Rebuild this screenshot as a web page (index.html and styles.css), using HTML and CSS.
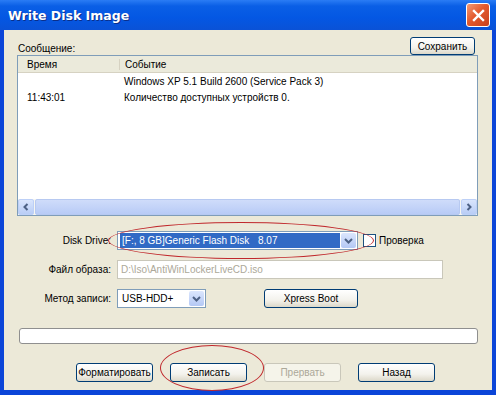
FILE: index.html
```html
<html>
    <head>
        <title>Write Disk Image</title>
        <link rel="stylesheet" href="styles.css">
    </head>
    <body>
        <div class="okno">
            <div class="zagolovok">
                <span class="nazvanie">Write Disk Image</span>
                <div class="zakryt">
                    <svg width="13" height="13" viewBox="0 0 13 13"><path d="M2 2 L11 11 M11 2 L2 11" stroke="#fff" stroke-width="2.4" stroke-linecap="square"/></svg>
                </div>
            </div>
            <div class="klient">
                <div class="soobsh">
                    <span>Сообщение:</span>
                    <button class="knopka sohranit">Сохранить</button>
                </div>
                <div class="zhurnal">
                    <div class="shapka">
                        <div class="kol-vremya">Время</div>
                        <div class="kol-sobytie">Событие</div>
                    </div>
                    <div class="stroki">
                        <div class="stroka"><div class="kol-vremya"></div><div class="kol-sobytie">Windows XP 5.1 Build 2600 (Service Pack 3)</div></div>
                        <div class="stroka"><div class="kol-vremya">11:43:01</div><div class="kol-sobytie">Количество доступных устройств 0.</div></div>
                    </div>
                    <div class="prokrutka">
                        <div class="strelka"><svg width="8" height="8" viewBox="0 0 8 8"><path d="M5.5 1 L2.5 4 L5.5 7" fill="none" stroke="#4d6185" stroke-width="2"/></svg></div>
                        <div class="polzunok"></div>
                        <div class="strelka"><svg width="8" height="8" viewBox="0 0 8 8"><path d="M2.5 1 L5.5 4 L2.5 7" fill="none" stroke="#4d6185" stroke-width="2"/></svg></div>
                    </div>
                </div>
                <div class="forma">
                    <div class="metka">Disk Drive:</div>
                    <div class="polya">
                        <div class="spisok-vybor disk">
                            <span class="vybrano">[F:, 8 GB]Generic Flash Disk</span>
                            <span class="vybrano versiya">8.07</span>
                            <div class="vniz"><svg width="9" height="7" viewBox="0 0 9 7"><path d="M1 2 L4.5 5.5 L8 2" fill="none" stroke="#4d6185" stroke-width="2"/></svg></div>
                        </div>
                        <div class="flazhok"></div>
                        <span>Проверка</span>
                    </div>
                    <div class="metka">Файл образа:</div>
                    <div class="polya">
                        <div class="pole">D:\Iso\AntiWinLockerLiveCD.iso</div>
                    </div>
                    <div class="metka">Метод записи:</div>
                    <div class="polya">
                        <div class="spisok-vybor metod">
                            <span>USB-HDD+</span>
                            <div class="vniz"><svg width="9" height="7" viewBox="0 0 9 7"><path d="M1 2 L4.5 5.5 L8 2" fill="none" stroke="#4d6185" stroke-width="2"/></svg></div>
                        </div>
                        <button class="knopka xpress">Xpress Boot</button>
                    </div>
                </div>
                <div class="progress"></div>
                <div class="knopki-niz">
                    <button class="knopka">Форматировать</button>
                    <button class="knopka">Записать</button>
                    <button class="knopka otkl">Прервать</button>
                    <button class="knopka">Назад</button>
                </div>
                <div class="oval oval1"></div>
                <div class="oval oval2"></div>
            </div>
        </div>
    </body>
</html>
```
FILE: styles.css
```css
body {margin: 0; background: #fff;}

.okno {
        width: 496px;
        height: 395px;
        display: flex;
        flex-direction: column;
        background: #0b45d8;
        font-family: "Liberation Sans", Arial, sans-serif;
        font-size: 10px;
        color: #000;}

.zagolovok {
        height: 30px;
        display: flex;
        align-items: center;
        justify-content: space-between;
        padding: 0 6px 0 8px;
        background: linear-gradient(#2a7cf5 0%, #0a5fe6 20%, #0457e3 60%, #0a52d6 100%);}

.nazvanie {
        color: #fff;
        font-family: "DejaVu Sans", sans-serif;
        font-weight: bold;
        font-size: 12.5px;
        text-shadow: 1px 1px 0 #0b2f8a;}

.zakryt {
        width: 22px;
        height: 22px;
        border: 1px solid #fff;
        border-radius: 3px;
        background: linear-gradient(135deg, #f29a76, #e35a2e 45%, #c8401b);
        display: flex;
        align-items: center;
        justify-content: center;}

.klient {
        position: relative;
        flex: 1;
        margin: 0 4px 5px 4px;
        background: #ece9d8;
        display: flex;
        flex-direction: column;}

.soobsh {
        display: flex;
        justify-content: space-between;
        align-items: flex-end;
        padding: 7px 17px 0 14px;
        height: 18px;}

.soobsh span {padding-bottom: 1px;}

.knopka {
        font-family: "Liberation Sans", Arial, sans-serif;
        font-size: 10px;
        color: #000;
        height: 19px;
        padding: 0;
        border: 1px solid #003c74;
        border-radius: 3px;
        background: linear-gradient(#ffffff, #f3f2ec 60%, #dcd8c9);}

.sohranit {width: 65px; height: 18px;}

.zhurnal {
        margin: 0 14px 0 13px;
        height: 159px;
        border: 1px solid #7f9db9;
        background: #fff;
        display: flex;
        flex-direction: column;}

.shapka {
        display: flex;
        height: 16px;
        align-items: center;
        background: #ebeadb;
        border-bottom: 1px solid #d6d2c2;}

.shapka .kol-vremya {border-right: 1px solid #d6d2c2;}

.kol-vremya {width: 92px; padding-left: 9px; flex-shrink: 0;}
.kol-sobytie {padding-left: 5px;}

.stroki {
        flex: 1;
        padding-top: 1px;}

.stroka {display: flex; line-height: 16px;}

.prokrutka {
        height: 16px;
        display: flex;
        background: #f6f6f1;}

.strelka {
        width: 16px;
        height: 16px;
        box-sizing: border-box;
        border: 1px solid #bdd0f7;
        border-radius: 2px;
        background: linear-gradient(#d9e5fd, #b9cdf6);
        display: flex;
        align-items: center;
        justify-content: center;}

.polzunok {
        flex: 1;
        margin: 0 1px;
        border-radius: 2px;
        border: 1px solid #b7c9f1;
        background: linear-gradient(#cfdcfa, #b8cbf6);}

.forma {
        display: grid;
        grid-template-columns: 107px auto;
        column-gap: 6px;
        row-gap: 10px;
        margin-top: 15px;
        align-items: center;}

.metka {text-align: right;}

.polya {
        display: flex;
        align-items: center;
        height: 19px;}

.spisok-vybor {
        height: 19px;
        box-sizing: border-box;
        border: 1px solid #7f9db9;
        background: #fff;
        display: flex;
        align-items: center;
        padding-left: 2px;
        position: relative;}

.spisok-vybor span {padding-left: 2px;}

.disk {width: 241px;}

.vybrano {
        background: #316ac5;
        color: #fff;
        height: 15px;
        line-height: 15px;}

.disk .vybrano:first-child {width: 136px; flex-shrink: 0;}
.disk .versiya {flex: 1; margin-right: 17px; padding-left: 0;}

.vniz {
        position: absolute;
        right: 1px;
        top: 1px;
        width: 15px;
        height: 15px;
        border-radius: 2px;
        background: linear-gradient(#dbe6fd, #b4c8f5);
        display: flex;
        align-items: center;
        justify-content: center;}

.flazhok {
        width: 11px;
        height: 11px;
        border: 1px solid #1c5180;
        background: #fff;
        margin: 0 3px 0 5px;}

.pole {
        width: 326px;
        height: 19px;
        box-sizing: border-box;
        border: 1px solid #c9c7ba;
        background: #fff;
        color: #aca899;
        padding-left: 3px;
        line-height: 17px;}

.metod {width: 89px;}

.xpress {width: 94px; margin-left: 58px;}

.progress {
        margin: 20px 14px 0 15px;
        height: 14px;
        border: 1px solid #8f8f8f;
        border-radius: 3px;
        background: #fff;}

.knopki-niz {
        display: flex;
        gap: 17px;
        margin: 19px 0 0 72px;}

.knopki-niz .knopka {width: 77px;}

.otkl {
        color: #aca899;
        border-color: #c9c7ba;
        background: #f5f4ea;}

.oval {
        position: absolute;
        border: 1px solid #c0282c;
        border-radius: 50%;}

.oval1 {left: 104px; top: 192px; width: 264px; height: 35px;}
.oval2 {left: 156px; top: 315px; width: 102px; height: 44px;}
```
